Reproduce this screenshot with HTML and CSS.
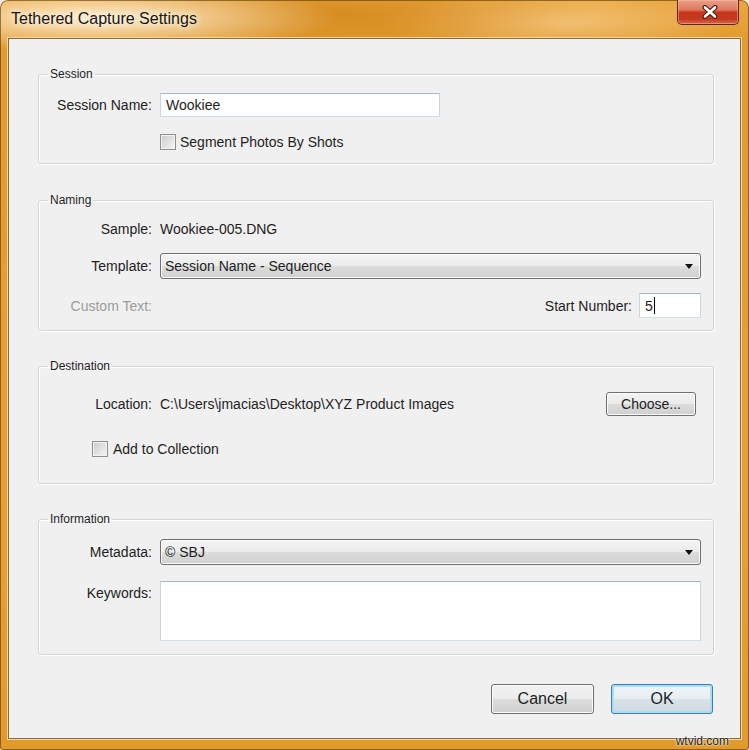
FILE: index.html
```html
<!DOCTYPE html>
<html lang="en">
<head>
  <meta charset="UTF-8" />
  <title>Tethered Capture Settings</title>
  <link rel="stylesheet" href="styles.css">
</head>
<body>

  <div class="window">
    <div class="titlebar">
      <span class="title">Tethered Capture Settings</span>
      <button class="close" type="button" aria-label="Close">
        <svg width="20" height="14" viewBox="0 0 20 14">
          <path d="M5 2.5 L15 11.5 M15 2.5 L5 11.5" stroke="#4a2216" stroke-width="5" stroke-linecap="round"/>
          <path d="M5 2.5 L15 11.5 M15 2.5 L5 11.5" stroke="#fff" stroke-width="2.6" stroke-linecap="round"/>
        </svg>
      </button>
    </div>

    <div class="client">
      <!-- session -->
      <fieldset class="group session">
        <legend>Session</legend>
        <div class="row r1">
          <label class="lbl" for="sessionName">Session Name:</label>
          <input id="sessionName" class="text name" type="text" value="Wookiee">
        </div>
        <label class="row r2">
          <input type="checkbox" class="check"> Segment Photos By Shots
        </label>
      </fieldset>

      <!-- naming -->
      <fieldset class="group naming">
        <legend>Naming</legend>
        <div class="row r1">
          <span class="lbl">Sample:</span>
          <span>Wookiee-005.DNG</span>
        </div>
        <div class="row r2">
          <span class="lbl">Template:</span>
          <div class="dropdown">
            <span>Session Name - Sequence</span>
            <svg class="arrow" width="8" height="5" viewBox="0 0 8 5"><path d="M0 0H8L4 5z" fill="#111"/></svg>
          </div>
        </div>
        <div class="row r3">
          <span class="lbl muted">Custom Text:</span>
          <span class="spacer"></span>
          <span class="start-lbl">Start Number:</span>
          <div class="text num">5<span class="caret"></span></div>
        </div>
      </fieldset>

      <!-- destination -->
      <fieldset class="group dest">
        <legend>Destination</legend>
        <div class="row r1">
          <span class="lbl">Location:</span>
          <span class="path">C:\Users\jmacias\Desktop\XYZ Product Images</span>
          <button class="btn choose" type="button">Choose...</button>
        </div>
        <label class="row r2">
          <input type="checkbox" class="check"> Add to Collection
        </label>
      </fieldset>

      <!-- information -->
      <fieldset class="group info">
        <legend>Information</legend>
        <div class="row r1">
          <span class="lbl">Metadata:</span>
          <div class="dropdown">
            <span>© SBJ</span>
            <svg class="arrow" width="8" height="5" viewBox="0 0 8 5"><path d="M0 0H8L4 5z" fill="#111"/></svg>
          </div>
        </div>
        <div class="row r2">
          <label class="lbl kw" for="keywords">Keywords:</label>
          <textarea id="keywords" class="text area"></textarea>
        </div>
      </fieldset>

      <div class="actions">
        <button class="btn cancel" type="button">Cancel</button>
        <button class="btn ok" type="button">OK</button>
      </div>
    </div>

    <div class="mark">wtvid.com</div>
  </div>

</body>
</html>
```

FILE: styles.css
```css
*{box-sizing:border-box;margin:0;padding:0}
body{background:#efeae3;font-family:"Liberation Sans",Arial,sans-serif;font-size:14px;color:#1e1e1e}

/* window frame */
.window{position:relative;width:749px;height:750px;display:flex;flex-direction:column;
        padding-bottom:11px;border-radius:8px 8px 3px 3px;
        background:
          radial-gradient(ellipse 240px 34px at 100px 18px,rgba(255,240,215,.95),rgba(255,240,215,0)),
          radial-gradient(ellipse 260px 40px at 330px 14px,rgba(200,120,10,.55),rgba(200,120,10,0)),
          radial-gradient(ellipse 180px 30px at 560px 22px,rgba(250,215,160,.6),rgba(250,215,160,0)),
          linear-gradient(#eaa740,#e19a2e 45px,#e5a136 60%,#e29a2b);
        box-shadow:inset 0 0 0 1px rgba(70,45,10,.55)}
.titlebar{height:38px;display:flex;align-items:flex-start;padding:0 10px 0 11px}
.title{font-size:16px;line-height:16px;margin-top:11px;color:#161616;
       text-shadow:0 0 6px #fff8ec,0 0 10px #fff3dc}
.close{margin-left:auto;width:62px;height:25px;display:flex;align-items:center;justify-content:center;
       padding-left:4px;border:1px solid #5e2616;border-top:0;border-radius:0 0 5px 5px;
       background:linear-gradient(#e9a088 0,#de7a60 40%,#c9341a 52%,#c23a20 80%,#d8694a 100%);
       box-shadow:inset 0 0 0 1px rgba(255,200,180,.45)}
.client{flex:1;margin:0 8px;background:#f0f0f0;border:1px solid #8c6a3a;
        box-shadow:0 0 0 1px #f6d7a2;padding:28px 26px 0 29px}

/* group boxes */
.group{border:1px solid #d5d5d5;border-radius:3px;padding:0 12px 13px 0;
       box-shadow:inset 1px 1px 0 #fff,1px 1px 0 #fff}
legend{font-size:12px;line-height:14px;padding:0 2px;margin-left:9px}
.row{display:flex;align-items:center}
.lbl{width:113px;flex:none;text-align:right;margin-right:8px}
.muted{color:#9c9c9c}
.spacer{flex:1}

.session{padding-top:12px;margin-bottom:29px}
.session .r1{height:24px}
.session .r2{height:16px;margin-top:17px;padding-left:121px}

.naming{padding-top:10px;padding-bottom:12px;margin-bottom:28px}
.naming .r1{height:24px}
.naming .r2{height:26px;margin-top:12px}
.naming .r3{height:25px;margin-top:14px}

.dest{padding-top:19px;padding-bottom:26px;margin-bottom:28px}
.dest .r1{height:24px}
.dest .r2{height:16px;margin-top:25px;padding-left:53px}
.path{flex:1}

.info{padding-top:13px;margin-bottom:29px}
.info .r1{height:26px}
.info .r2{height:60px;margin-top:16px;align-items:flex-start}
.kw{padding-top:4px}

/* controls */
.text{height:24px;border:1px solid;border-color:#a9b9c9 #c9d7e3 #d4e0ea #c9d7e3;background:#fff;
      padding:0 5px;font:14px "Liberation Sans",Arial,sans-serif;color:#1e1e1e;outline:none}
.name{width:280px}
.start-lbl{margin-right:7px}
.num{width:62px;height:25px;display:flex;align-items:center}
.caret{width:1px;height:17px;background:#000;margin-left:1px}
.area{flex:1;height:60px;resize:none}

.dropdown{flex:1;height:26px;display:flex;align-items:center;justify-content:space-between;
          padding:0 7px 0 4px;border:1px solid #707070;border-radius:3px;
          background:linear-gradient(#f4f4f4,#ebebeb 50%,#dddddd 50%,#d0d0d0);
          box-shadow:inset 0 0 0 1px #fbfbfb}

.check{appearance:none;width:16px;height:16px;margin-right:4px;border:1px solid #8f8f8f;
       background:linear-gradient(135deg,#c9c9c9,#f7f7f7);box-shadow:inset 0 0 0 1px #f2f2f2}
.dest .check{margin-right:5px}

.btn{height:30px;font:16px "Liberation Sans",Arial,sans-serif;color:#1e1e1e;border:1px solid #707070;
     border-radius:3px;background:linear-gradient(#f2f2f2,#ebebeb 50%,#dddddd 50%,#cfcfcf);
     box-shadow:inset 0 0 0 1px #fcfcfc}
.choose{width:90px;height:24px;font-size:14px;margin-right:5px}
.actions{display:flex;justify-content:flex-end;gap:17px;padding-right:1px}
.cancel{width:103px}
.ok{width:102px;border-color:#3c7fb1;
    background:linear-gradient(#f0f5f8,#e6edf1 50%,#d9e2e8 50%,#cfd9e0);
    box-shadow:inset 0 0 0 2px #a9dcf5}

.mark{position:absolute;right:20px;bottom:2px;font-size:12px;line-height:14px;color:#1b1b1b;
      text-shadow:0 0 2px #fff,0 0 2px #fff}
```
